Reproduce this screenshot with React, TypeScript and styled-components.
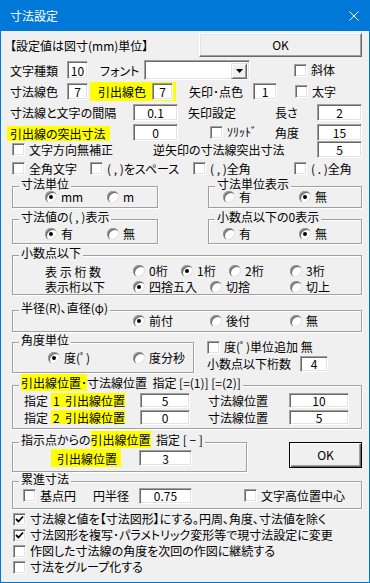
import React from "react";
import styled, { createGlobalStyle } from "styled-components";

const Global = createGlobalStyle`
  html, body { margin: 0; padding: 0; background: #f0f0f0; }
  body {
    font-family: "Noto Sans CJK JP", "Noto Sans", sans-serif;
    font-size: 12px;
    color: #000;
    font-feature-settings: "palt";
  }
  * { box-sizing: border-box; }
`;

const Window = styled.div`
  width: 370px;
  height: 583px;
  border: 1px solid #0078d7;
  border-top: none;
  background: #f0f0f0;
  display: flex;
  flex-direction: column;
  overflow: hidden;
`;

const TitleBar = styled.div`
  flex: none;
  height: 31px;
  margin: 0 -1px;
  background: #0078d7;
  color: #fff;
  display: flex;
  align-items: center;
  padding-left: 10px;
  padding-right: 11px;
  font-size: 12px;
`;

const TitleText = styled.span`
  flex: 1;
  line-height: 14px;
`;

const Body = styled.div`
  display: flex;
  flex-direction: column;
`;

const Row = styled.div<{ $mt?: number; $h: number }>`
  display: flex;
  align-items: center;
  flex: none;
  margin-top: ${(p) => p.$mt ?? 0}px;
  height: ${(p) => p.$h}px;
`;

const Txt = styled.span<{ $ml?: number; $w?: number }>`
  flex: none;
  margin-left: ${(p) => p.$ml ?? 0}px;
  width: ${(p) => (p.$w != null ? `${p.$w}px` : "auto")};
  white-space: nowrap;
  line-height: 13px;
`;

const Hl = styled.span<{ $ml?: number; $w: number; $h: number; $pl?: number; $dy?: number }>`
  flex: none;
  display: flex;
  align-items: center;
  margin-left: ${(p) => p.$ml ?? 0}px;
  margin-top: ${(p) => (p.$dy ?? 0) * 2}px;
  width: ${(p) => p.$w}px;
  height: ${(p) => p.$h}px;
  padding-left: ${(p) => p.$pl ?? 0}px;
  background: #ffff00;
  white-space: nowrap;
  line-height: 13px;
`;

const Mark = styled.span`
  background: #ffff00;
`;

const Field = styled.div<{ $ml?: number; $w: number; $h?: number }>`
  flex: none;
  margin-left: ${(p) => p.$ml ?? 0}px;
  width: ${(p) => p.$w}px;
  height: ${(p) => p.$h ?? 17}px;
  background: #fff;
  border-top: 1px solid #a0a0a0;
  border-left: 1px solid #a0a0a0;
  border-right: 1px solid #fff;
  border-bottom: 1px solid #fff;
  box-shadow: inset 1px 1px 0 #696969, inset -1px -1px 0 #e3e3e3;
  display: flex;
  align-items: center;
  justify-content: center;
  line-height: 12px;
  padding-top: 1px;
`;

const Combo = styled.div<{ $ml?: number; $w: number }>`
  flex: none;
  margin-left: ${(p) => p.$ml ?? 0}px;
  width: ${(p) => p.$w}px;
  height: 20px;
  background: #fff;
  border-top: 1px solid #a0a0a0;
  border-left: 1px solid #a0a0a0;
  border-right: 1px solid #fff;
  border-bottom: 1px solid #fff;
  box-shadow: inset 1px 1px 0 #696969, inset -1px -1px 0 #e3e3e3;
  display: flex;
  justify-content: flex-end;
  padding: 2px;
`;

const DropBtn = styled.div`
  width: 16px;
  height: 16px;
  background: #f0f0f0;
  border-top: 1px solid #e3e3e3;
  border-left: 1px solid #e3e3e3;
  border-right: 1px solid #696969;
  border-bottom: 1px solid #696969;
  box-shadow: inset 1px 1px 0 #fff, inset -1px -1px 0 #a0a0a0;
  display: flex;
  align-items: center;
  justify-content: center;
`;

const Btn = styled.div<{ $ml?: number; $w: number; $h: number; $def?: boolean }>`
  flex: none;
  align-self: flex-start;
  margin-left: ${(p) => p.$ml ?? 0}px;
  width: ${(p) => p.$w}px;
  height: ${(p) => p.$h}px;
  background: #f0f0f0;
  border: 1px solid;
  border-top-color: ${(p) => (p.$def ? "#000" : "#fff")};
  border-left-color: ${(p) => (p.$def ? "#000" : "#fff")};
  border-right-color: ${(p) => (p.$def ? "#000" : "#696969")};
  border-bottom-color: ${(p) => (p.$def ? "#000" : "#696969")};
  box-shadow: ${(p) =>
    p.$def
      ? "inset 1px 1px 0 #fff, inset -1px -1px 0 #696969, inset -2px -2px 0 #a0a0a0"
      : "inset -1px -1px 0 #a0a0a0, inset 1px 1px 0 #e3e3e3"};
  display: flex;
  align-items: center;
  justify-content: center;
  line-height: 14px;
`;

const CheckWrap = styled.div<{ $ml?: number; $w?: number }>`
  flex: none;
  display: flex;
  align-items: center;
  margin-left: ${(p) => p.$ml ?? 0}px;
  width: ${(p) => (p.$w != null ? `${p.$w}px` : "auto")};
  white-space: nowrap;
  line-height: 12px;
`;

const Box = styled.span`
  flex: none;
  width: 13px;
  height: 13px;
  margin-right: 4px;
  background: #fff;
  border-top: 1px solid #a0a0a0;
  border-left: 1px solid #a0a0a0;
  border-right: 1px solid #fff;
  border-bottom: 1px solid #fff;
  box-shadow: inset 1px 1px 0 #696969, inset -1px -1px 0 #e3e3e3;
  display: flex;
  align-items: center;
  justify-content: center;
`;

const Circle = styled.span<{ $on: boolean }>`
  flex: none;
  position: relative;
  width: 12px;
  height: 12px;
  margin-right: 4px;
  border-radius: 50%;
  background: #fff;
  box-shadow: inset 1px 1px 0 #a0a0a0, inset 2px 2px 0 #696969, inset -1px -1px 0 #e3e3e3;
  &::after {
    content: "";
    display: ${(p) => (p.$on ? "block" : "none")};
    position: absolute;
    left: 4px;
    top: 4px;
    width: 4px;
    height: 4px;
    border-radius: 50%;
    background: #000;
  }
`;

const Group = styled.div<{ $ml?: number; $w: number; $h: number }>`
  flex: none;
  position: relative;
  align-self: flex-start;
  margin-left: ${(p) => p.$ml ?? 0}px;
  width: ${(p) => p.$w}px;
  height: ${(p) => p.$h}px;
  border: 1px solid #a0a0a0;
  box-shadow: inset 1px 1px 0 #fff, 1px 1px 0 #fff;
  display: flex;
  flex-direction: column;
`;

const Legend = styled.span`
  position: absolute;
  left: 6px;
  top: -9px;
  padding: 0 2px;
  background: #f0f0f0;
  line-height: 12px;
  white-space: pre;
`;

const GroupRow = styled.div<{ $mt: number; $h: number }>`
  display: flex;
  flex: none;
  margin-top: ${(p) => p.$mt}px;
  height: ${(p) => p.$h}px;
`;

const SideCol = styled.div<{ $ml: number }>`
  display: flex;
  flex-direction: column;
  margin-left: ${(p) => p.$ml}px;
  margin-top: -2px;
  gap: 1px;
`;

const Check: React.FC<{ label: string; on?: boolean; ml?: number; w?: number }> = ({ label, on, ml, w }) => (
  <CheckWrap $ml={ml} $w={w}>
    <Box>
      {on && (
        <svg width="9" height="9" viewBox="0 0 9 9">
          <path d="M1 4 L3.5 6.5 L8 1.5" stroke="#000" strokeWidth="1.8" fill="none" />
        </svg>
      )}
    </Box>
    <span>{label}</span>
  </CheckWrap>
);

const Radio: React.FC<{ label: string; on?: boolean; ml?: number; w?: number }> = ({ label, on, ml, w }) => (
  <CheckWrap $ml={ml} $w={w}>
    <Circle $on={!!on} />
    <span>{label}</span>
  </CheckWrap>
);

export default function App() {
  return (
    <>
      <Global />
      <Window>
        <TitleBar>
          <TitleText>寸法設定</TitleText>
          <svg width="10" height="10" viewBox="0 0 10 10">
            <path d="M0.5 0.5 L9.5 9.5 M9.5 0.5 L0.5 9.5" stroke="#fff" strokeWidth="1" />
          </svg>
        </TitleBar>
        <Body>
          <Row $mt={2} $h={24}>
            <Txt $ml={9} $w={189}>【設定値は図寸(mm)単位】</Txt>
            <Btn $w={163} $h={24}>OK</Btn>
          </Row>
          <Row $mt={3} $h={20}>
            <Txt $ml={9} $w={57}>文字種類</Txt>
            <Field $w={21} $h={18}>10</Field>
            <Txt $ml={12} $w={44}>フォント</Txt>
            <Combo $w={106}>
              <DropBtn>
                <svg width="7" height="4" viewBox="0 0 7 4">
                  <path d="M0 0 H7 L3.5 4 Z" fill="#000" />
                </svg>
              </DropBtn>
            </Combo>
            <Check ml={44} label="斜体" />
          </Row>
          <Row $mt={2} $h={19}>
            <Txt $ml={9} $w={57}>寸法線色</Txt>
            <Field $w={21} $h={17}>7</Field>
            <Hl $ml={2} $w={86} $h={19} $pl={8}>
              <Txt $w={54}>引出線色</Txt>
              <Field $w={21} $h={17}>7</Field>
            </Hl>
            <Txt $ml={13} $w={64}>矢印･点色</Txt>
            <Field $w={24} $h={17}>1</Field>
            <Check ml={18} label="太字" />
          </Row>
          <Row $mt={2} $h={18}>
            <Txt $ml={9} $w={123}>寸法線と文字の間隔</Txt>
            <Field $w={45}>0.1</Field>
            <Txt $ml={10} $w={87}>矢印設定</Txt>
            <Txt $w={42}>長さ</Txt>
            <Field $w={45}>2</Field>
          </Row>
          <Row $mt={2} $h={18}>
            <Hl $ml={6} $w={103} $h={15} $pl={3} $dy={1}>引出線の突出寸法</Hl>
            <Field $ml={23} $w={45}>0</Field>
            <Check ml={32} w={65} label="ｿﾘｯﾄﾞ" />
            <Txt $w={42}>角度</Txt>
            <Field $w={45}>15</Field>
          </Row>
          <Row $mt={0} $h={17}>
            <Check ml={11} w={141} label="文字方向無補正" />
            <Txt $w={164}>逆矢印の寸法線突出寸法</Txt>
            <Field $w={45}>5</Field>
          </Row>
          <Row $mt={3} $h={15}>
            <Check ml={11} w={78} label="全角文字" />
            <Check w={103} label="( , )をスペース" />
            <Check w={101} label="( , )全角" />
            <Check label="( . )全角" />
          </Row>

          <GroupRow $mt={10} $h={22}>
            <Group $ml={11} $w={146} $h={22}>
              <Legend>寸法単位</Legend>
              <Row $h={20}>
                <Radio ml={32} w={62} on label="mm" />
                <Radio label="m" />
              </Row>
            </Group>
            <Group $ml={50} $w={154} $h={22}>
              <Legend>寸法単位表示</Legend>
              <Row $h={20}>
                <Radio ml={14} w={76} label="有" />
                <Radio on label="無" />
              </Row>
            </Group>
          </GroupRow>

          <GroupRow $mt={11} $h={25}>
            <Group $ml={11} $w={146} $h={25}>
              <Legend>寸法値の( , )表示</Legend>
              <Row $mt={3} $h={21}>
                <Radio ml={32} w={62} on label="有" />
                <Radio label="無" />
              </Row>
            </Group>
            <Group $ml={50} $w={154} $h={25}>
              <Legend>小数点以下の0表示</Legend>
              <Row $mt={3} $h={21}>
                <Radio ml={14} w={76} label="有" />
                <Radio on label="無" />
              </Row>
            </Group>
          </GroupRow>

          <GroupRow $mt={11} $h={40}>
            <Group $ml={11} $w={350} $h={40}>
              <Legend>小数点以下</Legend>
              <Row $mt={7} $h={16}>
                <Txt $ml={32} $w={88}>表 示 桁 数</Txt>
                <Radio w={48} label="0桁" />
                <Radio w={48} on label="1桁" />
                <Radio w={61} label="2桁" />
                <Radio label="3桁" />
              </Row>
              <Row $h={15}>
                <Txt $ml={32} $w={88}>表示桁以下</Txt>
                <Radio w={77} on label="四捨五入" />
                <Radio w={80} label="切捨" />
                <Radio label="切上" />
              </Row>
            </Group>
          </GroupRow>

          <GroupRow $mt={15} $h={22}>
            <Group $ml={11} $w={350} $h={22}>
              <Legend>半径(R)、直径(φ)</Legend>
              <Row $h={20}>
                <Radio ml={120} w={77} on label="前付" />
                <Radio w={80} label="後付" />
                <Radio label="無" />
              </Row>
            </Group>
          </GroupRow>

          <GroupRow $mt={10} $h={31}>
            <Group $ml={11} $w={182} $h={31}>
              <Legend>角度単位</Legend>
              <Row $h={29}>
                <Radio ml={35} w={85} on label="度(ﾟ)" />
                <Radio label="度分秒" />
              </Row>
            </Group>
            <SideCol $ml={13}>
              <Row $h={14}>
                <Check label="度(ﾟ)単位追加 無" />
              </Row>
              <Row $h={17}>
                <Txt $w={93}>小数点以下桁数</Txt>
                <Field $w={28} $h={16}>4</Field>
              </Row>
            </SideCol>
          </GroupRow>

          <GroupRow $mt={12} $h={44}>
            <Group $ml={11} $w={350} $h={44}>
              <Legend>
                <Mark>引出線位置･</Mark>寸法線位置  指定 [=(1)] [=(2)]
              </Legend>
              <Row $mt={6} $h={16}>
                <Txt $ml={11} $w={27}>指定</Txt>
                <Hl $w={74} $h={14} $pl={2}>1&nbsp;&nbsp;引出線位置</Hl>
                <Field $ml={15} $w={50} $h={15}>5</Field>
                <Txt $ml={18} $w={81}>寸法線位置</Txt>
                <Field $w={60} $h={15}>10</Field>
              </Row>
              <Row $mt={1} $h={16}>
                <Txt $ml={11} $w={27}>指定</Txt>
                <Hl $w={74} $h={14} $pl={2}>2&nbsp;&nbsp;引出線位置</Hl>
                <Field $ml={15} $w={50} $h={15}>0</Field>
                <Txt $ml={18} $w={81}>寸法線位置</Txt>
                <Field $w={60} $h={15}>5</Field>
              </Row>
            </Group>
          </GroupRow>

          <GroupRow $mt={13} $h={30}>
            <Group $ml={11} $w={235} $h={30}>
              <Legend>
                指示点からの<Mark>引出線位置</Mark>  指定 [ − ]
              </Legend>
              <Row $mt={5} $h={20}>
                <Hl $ml={38} $w={70} $h={18} $pl={6}>引出線位置</Hl>
                <Field $ml={18} $w={53} $h={16}>3</Field>
              </Row>
            </Group>
            <Btn $ml={42} $w={73} $h={26} $def>OK</Btn>
          </GroupRow>

          <GroupRow $mt={9} $h={28}>
            <Group $ml={11} $w={350} $h={28}>
              <Legend>累進寸法</Legend>
              <Row $mt={1} $h={25}>
                <Check ml={10} w={70} label="基点円" />
                <Txt $w={46}>円半径</Txt>
                <Field $w={53} $h={16}>0.75</Field>
                <Check ml={52} label="文字高位置中心" />
              </Row>
            </Group>
          </GroupRow>

          <Row $mt={2} $h={16}>
            <Check ml={12} on label="寸法線と値を【寸法図形】にする。円周、角度、寸法値を除く" />
          </Row>
          <Row $h={16}>
            <Check ml={12} on label="寸法図形を複写･パラメトリック変形等で現寸法設定に変更" />
          </Row>
          <Row $h={16}>
            <Check ml={12} label="作図した寸法線の角度を次回の作図に継続する" />
          </Row>
          <Row $h={16}>
            <Check ml={12} label="寸法をグループ化する" />
          </Row>
        </Body>
      </Window>
    </>
  );
}
